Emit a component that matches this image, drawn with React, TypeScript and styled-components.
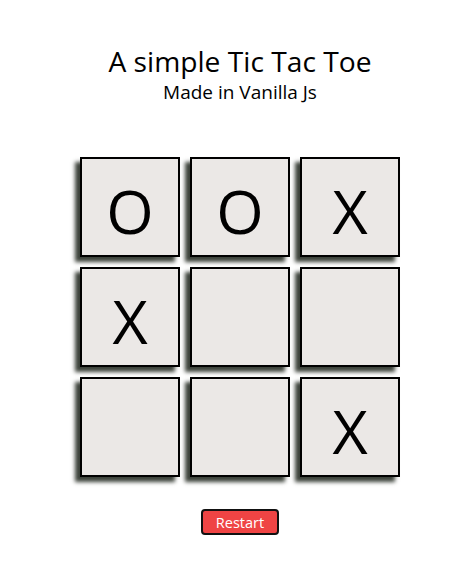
import React from "react";
import styled, { createGlobalStyle } from "styled-components";

const Global = createGlobalStyle`
  html, body { margin: 0; padding: 0; background: #fff; }
  body { font-family: "Open Sans", "Noto Sans", sans-serif; color: #000; }
`;

const Page = styled.main`
  display: flex;
  flex-direction: column;
  align-items: center;
  padding-left: 18px;
`;

const Header = styled.header`
  display: flex;
  flex-direction: column;
  align-items: center;
  margin-top: 41px;
`;

const Title = styled.h1`
  margin: 0;
  font-size: 28.2px;
  font-weight: 400;
  line-height: 40px;
`;

const Subtitle = styled.h3`
  margin: 0;
  font-size: 19px;
  font-weight: 400;
  line-height: 22px;
`;

const Board = styled.div`
  display: grid;
  grid-template-columns: repeat(3, 100px);
  grid-auto-rows: 100px;
  gap: 10px;
  margin-top: 54px;
`;

const Cell = styled.div`
  box-sizing: border-box;
  border: 2px solid #000;
  background: #ebe8e6;
  box-shadow: -5px 5px 4px rgb(60, 66, 58);
  display: flex;
  align-items: center;
  justify-content: center;
  font-size: 61px;
  line-height: 1;
  padding-top: 6px;
`;

const RestartButton = styled.button`
  margin-top: 32px;
  width: 78px;
  height: 26px;
  box-sizing: border-box;
  background: #ef4444;
  color: #fff;
  border: 2px solid #111;
  border-radius: 4px;
  font-family: "Open Sans", "Noto Sans", sans-serif;
  font-size: 14.5px;
  padding: 0;
  cursor: pointer;
`;

const cells = ["O", "O", "X", "X", "", "", "", "", "X"];

export default function App() {
  return (
    <>
      <Global />
      <Page>
        <Header>
          <Title>A simple Tic Tac Toe</Title>
          <Subtitle>Made in Vanilla Js</Subtitle>
        </Header>
        <Board>
          {cells.map((c, i) => (
            <Cell key={i}>{c}</Cell>
          ))}
        </Board>
        <RestartButton>Restart</RestartButton>
      </Page>
    </>
  );
}
